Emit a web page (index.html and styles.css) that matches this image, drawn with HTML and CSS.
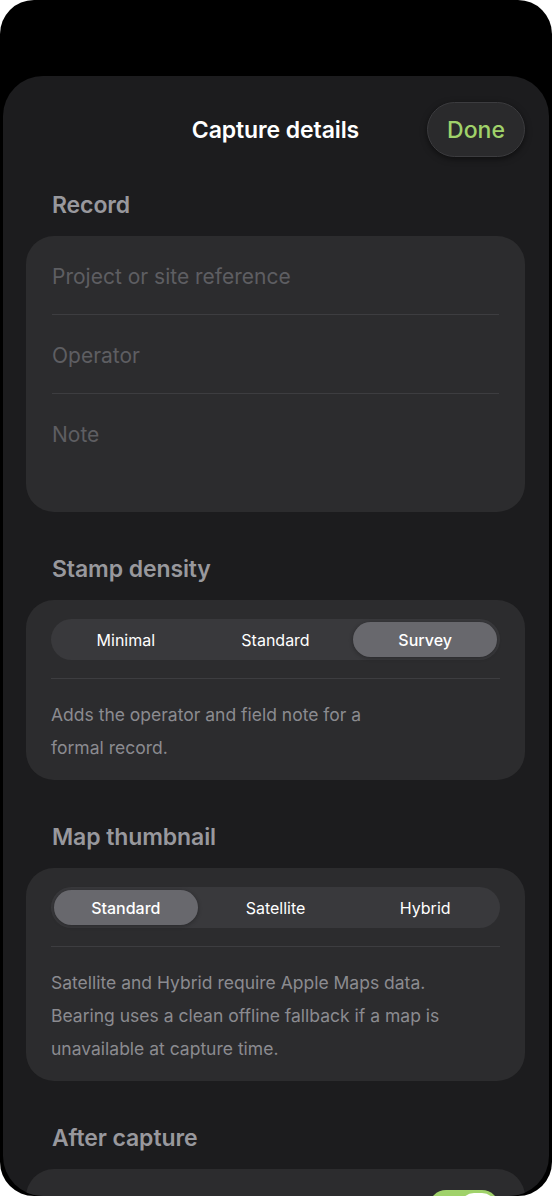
FILE: index.html
```html
<!DOCTYPE html>
<html lang="en">
<head>
    <meta charset="UTF-8">
    <meta name="viewport" content="width=device-width, initial-scale=1.0">
    <title>Capture details</title>
    <link rel="stylesheet" href="styles.css">
</head>
<body>
    <div class="screen">
        <div class="sheet">
            <header class="sheet-header">
                <h1>Capture details</h1>
                <button class="done">Done</button>
            </header>

            <h2 class="section-title">Record</h2>
            <div class="card">
                <div class="field"><input type="text" placeholder="Project or site reference"></div>
                <div class="field"><input type="text" placeholder="Operator"></div>
                <div class="field note"><textarea placeholder="Note"></textarea></div>
            </div>

            <h2 class="section-title">Stamp density</h2>
            <div class="card padded">
                <div class="segmented">
                    <button>Minimal</button>
                    <button>Standard</button>
                    <button class="selected">Survey</button>
                </div>
                <p class="hint">Adds the operator and field note for a<br>formal record.</p>
            </div>

            <h2 class="section-title">Map thumbnail</h2>
            <div class="card padded">
                <div class="segmented">
                    <button class="selected">Standard</button>
                    <button>Satellite</button>
                    <button>Hybrid</button>
                </div>
                <p class="hint">Satellite and Hybrid require Apple Maps data.<br>Bearing uses a clean offline fallback if a map is<br>unavailable at capture time.</p>
            </div>

            <h2 class="section-title">After capture</h2>
            <div class="card">
                <div class="toggle-row">
                    <span class="switch on"></span>
                </div>
            </div>
        </div>
    </div>
</body>
</html>
```

FILE: styles.css
```css
html, body {
    margin: 0;
    background: #fff;
}
body {
    font-family: Inter, "Noto Sans", sans-serif;
    -webkit-font-smoothing: antialiased;
}
.screen {
    height: 1196px;
    box-sizing: border-box;
    padding: 76px 3px 0;
    background: #000;
    border-radius: 34px;
    overflow: hidden;
}
.sheet {
    height: 100%;
    box-sizing: border-box;
    padding: 26px 24px 0 23px;
    background: #1c1c1e;
    border-radius: 40px;
    overflow: hidden;
}
.sheet-header {
    position: relative;
    height: 55px;
    display: flex;
    align-items: center;
    justify-content: center;
}
.sheet-header h1 {
    margin: 0;
    font-size: 23px;
    font-weight: 600;
    color: #fff;
    letter-spacing: -0.1px;
}
.done {
    position: absolute;
    right: 0;
    top: 0;
    width: 98px;
    height: 55px;
    border-radius: 28px;
    border: 1px solid #3c3c3f;
    background: #2a2a2c;
    box-shadow: 0 2px 6px rgba(0, 0, 0, 0.5);
    color: #a0d26a;
    font-family: inherit;
    font-size: 23px;
    font-weight: 500;
}
.section-title {
    margin: 34px 0 17px 26px;
    font-size: 23px;
    line-height: 28px;
    font-weight: 600;
    color: #98989d;
    letter-spacing: -0.1px;
}
.card + .section-title {
    margin-top: 43px;
}
.card {
    background: #2c2c2e;
    border-radius: 28px;
}
.card.padded {
    padding: 19px 25px 16px;
}
.field {
    margin: 0 26px;
    padding: 27px 0 24px;
    border-bottom: 1px solid #3d3d40;
}
.field.note {
    border-bottom: none;
    padding: 27px 0 0;
    height: 91px;
}
.field input, .field textarea {
    display: block;
    width: 100%;
    margin: 0;
    padding: 0;
    border: none;
    outline: none;
    background: none;
    resize: none;
    color: #fff;
    font-family: inherit;
    font-size: 21px;
    line-height: 27px;
}
.field textarea {
    height: 60px;
}
.field input::placeholder, .field textarea::placeholder {
    color: #5e5e62;
}
.segmented {
    display: grid;
    grid-template-columns: repeat(3, 1fr);
    gap: 6px;
    padding: 3px;
    height: 41px;
    box-sizing: border-box;
    background: #39393c;
    border-radius: 21px;
}
.segmented button {
    border: none;
    background: none;
    border-radius: 18px;
    color: #fff;
    font-family: inherit;
    font-size: 16px;
    font-weight: 400;
}
.segmented button.selected {
    background: #68686d;
    box-shadow: 0 1px 4px rgba(0, 0, 0, 0.3);
    font-weight: 500;
}
.hint {
    margin: 18px 0 0;
    padding-top: 19px;
    border-top: 1px solid #3d3d40;
    color: #8b8b90;
    font-size: 17.5px;
    line-height: 33px;
}
.toggle-row {
    display: flex;
    align-items: center;
    justify-content: flex-end;
    padding: 21px 26px;
}
.switch {
    width: 70px;
    height: 34px;
    border-radius: 17px;
    background: #a0d26a;
    position: relative;
}
.switch.on::after {
    content: "";
    position: absolute;
    right: 3px;
    top: 3px;
    width: 36px;
    height: 28px;
    border-radius: 14px;
    background: #fff;
}
```
